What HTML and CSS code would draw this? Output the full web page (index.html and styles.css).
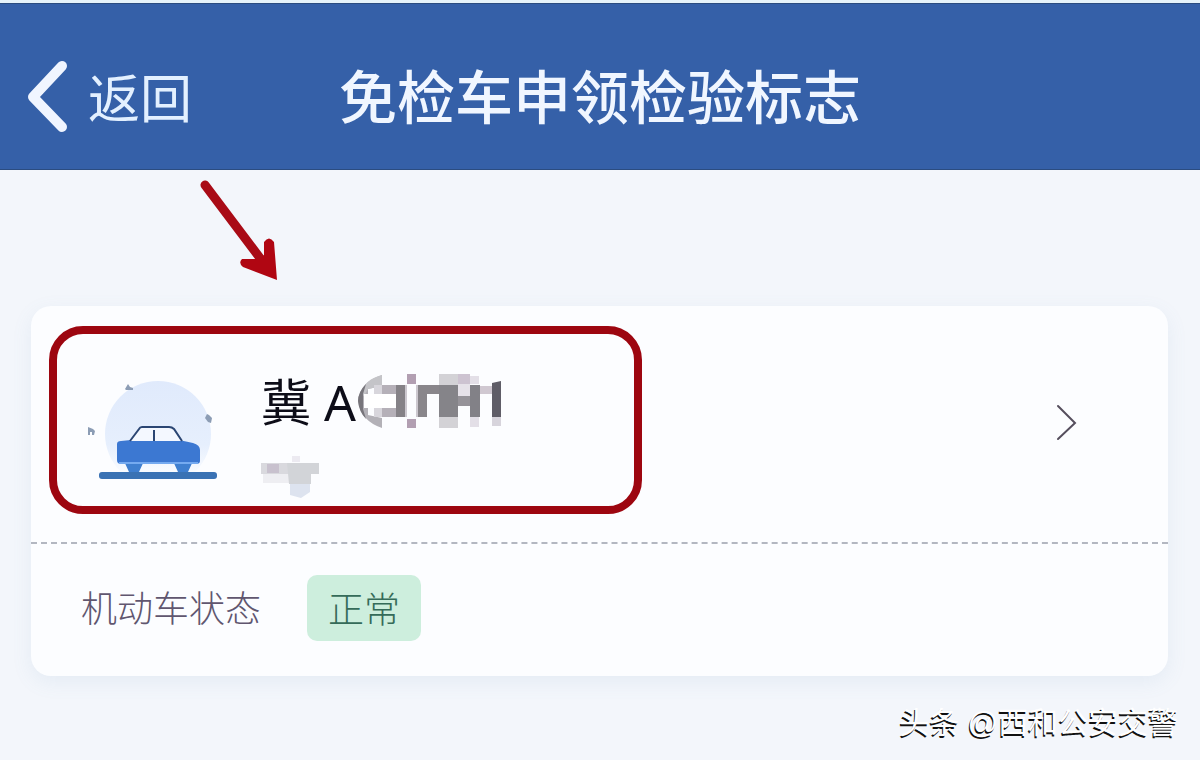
FILE: index.html
```html
<!DOCTYPE html>
<html lang="zh-CN">
<head>
    <meta charset="UTF-8">
    <meta name="viewport" content="width=device-width, initial-scale=1.0">
    <title>免检车申领检验标志</title>
    <link rel="stylesheet" href="styles.css">
</head>
<body>
    <header class="header">
        <a href="#" class="back">
            <svg class="back-icon" width="42" height="74" viewBox="0 0 42 74">
                <path d="M36 7 L7 38 L36 68" />
            </svg>
            <span>返回</span>
        </a>
        <h1 class="title">免检车申领检验标志</h1>
    </header>

    <div class="pointer">
        <svg width="80" height="104" viewBox="0 0 80 104" aria-hidden="true">
            <path class="pointer-line" d="M5 5 L66 86" />
            <path class="pointer-head" d="M77 100 L43 87 Q38 83 42 79 L60 79 L64 75 L64 62 Q69 55 74 62 Z" />
        </svg>
    </div>

    <main class="card">
        <div class="vehicle-row">
            <a href="#" class="vehicle">
                <svg class="vehicle-icon" width="140" height="110" viewBox="0 0 140 110" aria-hidden="true">
                    <defs>
                        <linearGradient id="halo" x1="0" y1="0" x2="0" y2="1">
                            <stop offset="0" stop-color="#e0eafc" />
                            <stop offset="0.6" stop-color="#e6effd" />
                            <stop offset="0.9" stop-color="#fcfdff" />
                        </linearGradient>
                    </defs>
                    <circle cx="75" cy="60" r="53" fill="url(#halo)" />
                    <rect x="16" y="98" width="118" height="7" rx="3" fill="#3a72b4" />
                    <path d="M41 87h20l-5 11h-10zM90 87h20l-5 11h-10z" fill="#3f7fd0" />
                    <path d="M34 70q0-3 4-3l10-1h48l14 3q7 2 7 7v11q0 3-4 3H38q-4 0-4-4z" fill="#3c78d2" />
                    <path d="M36 89h79" stroke="#75aaf0" stroke-width="2" />
                    <path d="M47 67l9-12q1-2 3-2h27q3 0 5 2l8 12z" fill="#f4f8ff" />
                    <path d="M47 67l9-12q1-2 3-2h27q3 0 5 2l8 12M71 56v11" fill="none" stroke="#2b4673" stroke-width="2" />
                    <g fill="#8c9db5">
                        <path d="M42 15l3-5 2 3 3 1v2h-7zM5 53l5 2 2 2-1 4H9v-3H7v3H5z" />
                        <path d="M124 40l2 1 3 3-1 5-3-1-3-4z" />
                    </g>
                </svg>
                <div class="vehicle-info">
                    <div class="plate">
                        <span>冀 A</span>
                        <svg width="146" height="56" viewBox="0 0 146 56" aria-hidden="true">
                            <path d="M24 1Q2 8 0 27Q3 47 24 54V44L10 41V15L24 12z" fill="#b3b1b7" />
                            <path d="M24 1V12L10 15L6 22L2 20Q7 5 24 1z" fill="#c4c4c8" />
                            <path d="M8 10Q0 18 0 27Q1 38 8 45L5 35V20z" fill="#77757b" />
                            <path d="M24 11h14v9H24zM24 34h14v9H24z" fill="#b5b0b8" />
                            <path d="M16 11h8v9h-8zM16 34h8v9h-8z" fill="#d8d6dc" />
                            <path d="M6 20h32v14H6z" fill="#ffffff" />
                            <path d="M38 11h9v32h-9z" fill="#858287" />
                            <path d="M49 0h9v10h-9zM49 45h9v9h-9z" fill="#b29fb2" />
                            <path d="M47 11h2v32h-2zM58 11h2v32h-2z" fill="#ccc8cf" />
                            <path d="M60 11h21v9H69v23h-9z" fill="#89868b" />
                            <path d="M81 0h19v11H81zM81 43h19v11H81z" fill="#d3d2d6" />
                            <path d="M81 11h19v32H81z" fill="#858489" />
                            <path d="M100 0h12v10h-12z" fill="#cdc3d1" />
                            <path d="M100 10h12v12h-12z" fill="#e6e2e9" />
                            <path d="M100 22h12v10h-12z" fill="#969399" />
                            <path d="M112 11h10v32h-10z" fill="#828187" />
                            <path d="M112 2h9v8h-9zM112 43h9v10h-9z" fill="#e3dfe7" />
                            <path d="M122 12h12v8h-12z" fill="#d0c8d1" />
                            <path d="M134 9l9-2v36h-9z" fill="#5f5d67" />
                            <path d="M134 43h9v9h-9z" fill="#d7d4dc" />
                        </svg>
                    </div>
                    <svg class="vehicle-kind" width="62" height="46" viewBox="0 0 62 46" aria-hidden="true">
                        <path d="M0 9h58v11H0z" fill="#d9d9de" />
                        <path d="M2 20h28v9H2z" fill="#eeeef2" />
                        <path d="M6 10h12v9H6z" fill="#c8c1ce" />
                        <path d="M26 9h32v11h-8v10H28z" fill="#d2d4d8" />
                        <path d="M31 2h8v6h-8z" fill="#eceaf1" />
                        <path d="M29 30h20v8l-9 6-11-3z" fill="#dde3ef" />
                    </svg>
                </div>
            </a>
            <a href="#" class="more" aria-label="查看详情">
                <svg width="22" height="38" viewBox="0 0 22 38">
                    <path d="M2 3 L19 20 L2 36" />
                </svg>
            </a>
        </div>
        <div class="status-row">
            <span class="status-label">机动车状态</span>
            <span class="status-tag">正常</span>
        </div>
    </main>

    <footer class="watermark">头条 @西和公安交警</footer>
</body>
</html>
```
FILE: styles.css
```css
* {
    box-sizing: border-box;
    margin: 0;
    padding: 0;
}
body {
    font-family: "Noto Sans CJK SC", sans-serif;
    background: #f3f6fb;
    border-top: 3px solid #e6f3fa;
    min-height: 100vh;
}
a {
    color: inherit;
    text-decoration: none;
}
svg {
    display: block;
    flex-shrink: 0;
}
.header {
    display: grid;
    grid-template-columns: 1fr auto 1fr;
    align-items: center;
    height: 167px;
    padding: 18px 26px 0;
    background: #3560a8;
    border-top: 1px solid #2b4c80;
    border-bottom: 1px solid #2b4c80;
    color: #f0f6ff;
}
.back {
    display: flex;
    align-items: center;
    gap: 20px;
    font-size: 52px;
    line-height: 76px;
    color: #e3f0ff;
}
.back-icon path {
    fill: none;
    stroke: #f0f5ff;
    stroke-width: 10;
    stroke-linecap: round;
    stroke-linejoin: round;
}
.title {
    padding-bottom: 4px;
    font-size: 58px;
    font-weight: 500;
    line-height: 84px;
}
.pointer {
    height: 136px;
    padding: 10px 200px;
}
.pointer-line {
    stroke: #a90b16;
    stroke-width: 9;
    stroke-linecap: round;
}
.pointer-head {
    fill: #b00612;
}
.card {
    margin: 0 32px 0 31px;
    background: #fcfdff;
    border-radius: 20px;
    box-shadow: 0 6px 20px rgba(110, 150, 190, 0.1);
}
.vehicle-row {
    display: flex;
    align-items: center;
    justify-content: space-between;
    padding: 20px 90px 28px 18px;
    border-bottom: 2px dashed #b3b7c1;
}
.vehicle {
    display: flex;
    align-items: center;
    gap: 38px;
    width: 57.6%;
    height: 188px;
    padding: 18px 24px 0 26px;
    border: 8px solid #9d0610;
    border-radius: 34px;
}
.plate {
    display: flex;
    align-items: center;
    gap: 2px;
    font-family: "Noto Sans", "Noto Sans CJK SC", sans-serif;
    font-size: 50px;
    line-height: 72px;
    color: #0d0d18;
}
.vehicle-info {
    padding-top: 8px;
}
.vehicle-kind {
    margin-top: 16px;
}
.more {
    padding-top: 4px;
}
.more path {
    fill: none;
    stroke: #554e5d;
    stroke-width: 2;
    stroke-linecap: round;
}
.status-row {
    display: flex;
    align-items: center;
    gap: 46px;
    padding: 31px 50px 35px;
}
.status-label {
    padding-bottom: 4px;
    font-size: 36px;
    font-weight: 300;
    line-height: 52px;
    color: #60566f;
}
.status-tag {
    padding: 6px 21px 8px;
    border-radius: 10px;
    background: #cdeedd;
    font-size: 36px;
    font-weight: 300;
    line-height: 52px;
    color: #356b59;
}
.watermark {
    padding: 25px 22px 0;
    font-family: "Liberation Sans", "Noto Sans CJK SC", sans-serif;
    font-size: 30px;
    line-height: 44px;
    text-align: right;
    color: #ffffff;
    text-shadow: -1px 2px 0 #111111;
}
```
